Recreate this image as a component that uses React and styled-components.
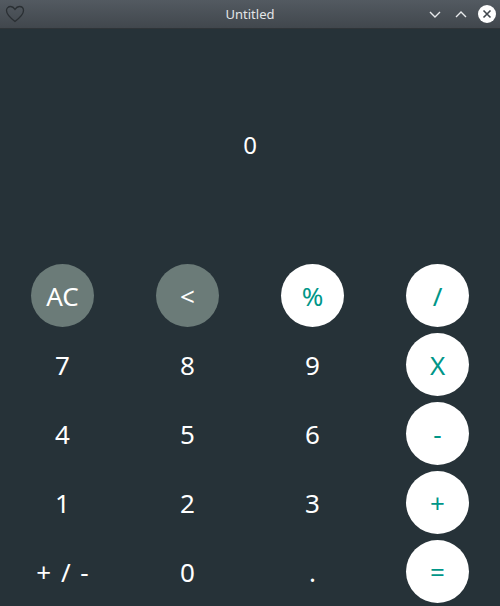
import React, { useState } from 'react'
import styled, { createGlobalStyle } from 'styled-components'

const GlobalStyle = createGlobalStyle`
  html, body {
    margin: 0;
    padding: 0;
    background: #263238;
  }
  * {
    box-sizing: border-box;
  }
`

const UI = {
  Window: styled.div`
    width: 500px;
    height: 606px;
    display: flex;
    flex-direction: column;
    background: #263238;
    font-family: 'Noto Sans', 'Open Sans', sans-serif;
    overflow: hidden;
  `,
  TitleBar: styled.div`
    height: 29px;
    flex: none;
    display: flex;
    align-items: center;
    justify-content: space-between;
    padding: 0 4px 0 5px;
    background: linear-gradient(#535a61, #41474d);
    border-bottom: 1px solid #2f3438;
    position: relative;
  `,
  Title: styled.div`
    position: absolute;
    left: 0;
    right: 0;
    text-align: center;
    color: #e3e5e7;
    font-size: 13px;
    pointer-events: none;
  `,
  Controls: styled.div`
    display: flex;
    align-items: center;
    gap: 8px;
  `,
  CtrlButton: styled.span`
    width: 18px;
    height: 18px;
    display: flex;
    align-items: center;
    justify-content: center;
  `,
  Display: styled.div`
    height: 232px;
    flex: none;
    display: flex;
    align-items: center;
    justify-content: center;
    color: #ffffff;
    font-size: 24px;
    padding-bottom: 2px;
  `,
  Keypad: styled.div`
    flex: 1;
    display: grid;
    grid-template-columns: repeat(4, 1fr);
    grid-auto-rows: 69px;
  `,
  Cell: styled.div`
    display: flex;
    align-items: center;
    justify-content: center;
  `,
  Key: styled.button`
    width: 63px;
    height: 63px;
    border: none;
    border-radius: 50%;
    padding: 0;
    display: flex;
    align-items: center;
    justify-content: center;
    font-family: inherit;
    font-size: 26px;
    word-spacing: 3px;
    cursor: pointer;
    background: ${p => (p.$kind === 'op' ? '#ffffff' : p.$kind === 'fn' ? '#6b7b78' : 'transparent')};
    color: ${p => (p.$kind === 'op' ? '#009688' : '#ffffff')};
    white-space: nowrap;
  `,
}

const HeartIcon = () => (
  <svg width="20" height="18" viewBox="0 0 20 18" fill="none">
    <path
      d="M10 16.5 C4 12 1.5 9 1.5 5.6 C1.5 3.2 3.3 1.5 5.6 1.5 C7.6 1.5 9 2.8 10 4.3 C11 2.8 12.4 1.5 14.4 1.5 C16.7 1.5 18.5 3.2 18.5 5.6 C18.5 9 16 12 10 16.5 Z"
      stroke="#2a2f33"
      strokeWidth="1.3"
    />
  </svg>
)

const ChevronDown = () => (
  <svg width="14" height="10" viewBox="0 0 14 10" fill="none">
    <path d="M2 3 L7 8 L12 3" stroke="#e8eaec" strokeWidth="1.4" />
  </svg>
)

const ChevronUp = () => (
  <svg width="14" height="10" viewBox="0 0 14 10" fill="none">
    <path d="M2 8 L7 3 L12 8" stroke="#e8eaec" strokeWidth="1.4" />
  </svg>
)

const CloseIcon = () => (
  <svg width="18" height="18" viewBox="0 0 18 18">
    <circle cx="9" cy="9" r="9" fill="#ffffff" />
    <path d="M5.5 5.5 L12.5 12.5 M12.5 5.5 L5.5 12.5" stroke="#41474d" strokeWidth="1.6" />
  </svg>
)

const KEYS = [
  ['AC', 'fn'], ['<', 'fn'], ['%', 'op'], ['/', 'op'],
  ['7'], ['8'], ['9'], ['X', 'op'],
  ['4'], ['5'], ['6'], ['-', 'op'],
  ['1'], ['2'], ['3'], ['+', 'op'],
  ['+ / -'], ['0'], ['.'], ['=', 'op'],
]

export default function App () {
  const [value] = useState('0')
  return (
    <UI.Window>
      <GlobalStyle />
      <UI.TitleBar>
        <HeartIcon />
        <UI.Title>Untitled</UI.Title>
        <UI.Controls>
          <UI.CtrlButton><ChevronDown /></UI.CtrlButton>
          <UI.CtrlButton><ChevronUp /></UI.CtrlButton>
          <UI.CtrlButton><CloseIcon /></UI.CtrlButton>
        </UI.Controls>
      </UI.TitleBar>
      <UI.Display>{value}</UI.Display>
      <UI.Keypad>
        {KEYS.map(([label, kind]) => (
          <UI.Cell key={label}>
            <UI.Key $kind={kind || 'num'}>{label}</UI.Key>
          </UI.Cell>
        ))}
      </UI.Keypad>
    </UI.Window>
  )
}
